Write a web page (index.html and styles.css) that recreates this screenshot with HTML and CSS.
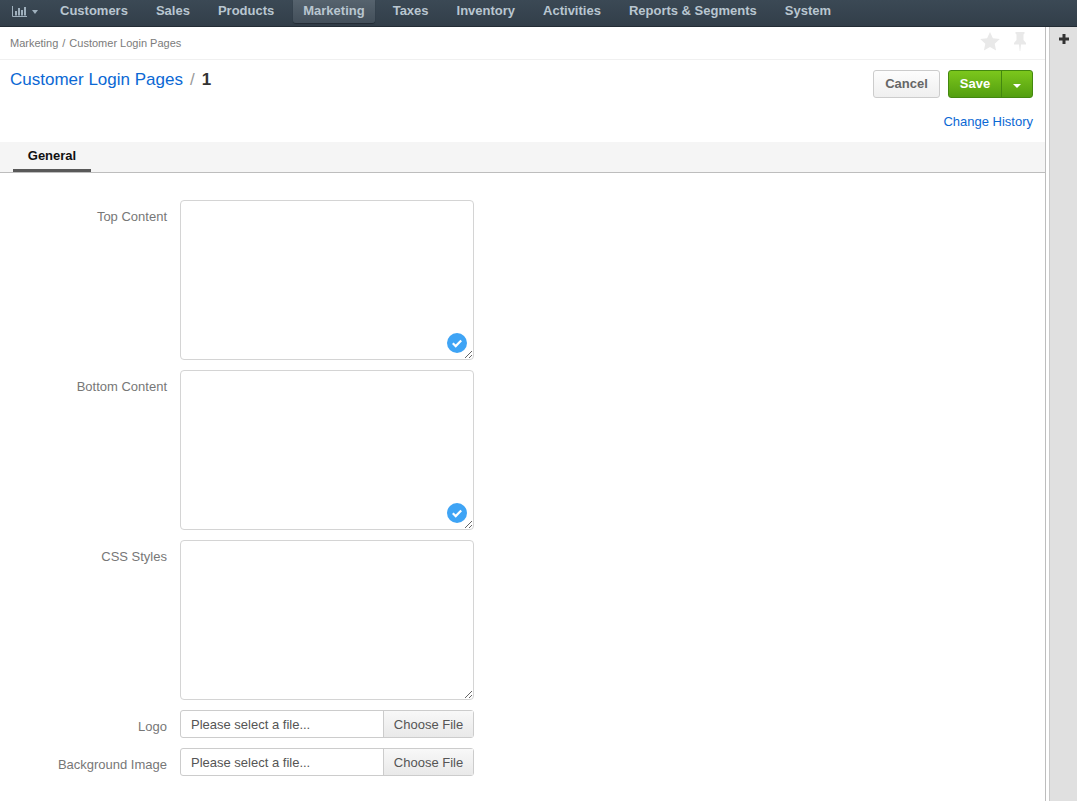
FILE: index.html
```html
<!doctype html>
<html lang="en">
<head>
    <meta charset="UTF-8">
    <title>Customer Login Pages</title>
    <link rel="stylesheet" href="styles.css">
</head>
<body>
<nav class="topnav">
    <a class="nav-dash">
        <svg width="15" height="11" viewBox="0 0 15 11"><path d="M0.500 0v10.500H15" fill="none" stroke="#9fb0bd"/><path d="M3 5h2v4.500H3zM6 2h2v7.500H6zM9 4h2v5.500H9zM12 1h2v8.500h-2z" fill="#9fb0bd"/></svg>
        <span class="caret caret-nav"></span>
    </a>
    <a class="nav-item">Customers</a>
    <a class="nav-item">Sales</a>
    <a class="nav-item">Products</a>
    <a class="nav-item active">Marketing</a>
    <a class="nav-item">Taxes</a>
    <a class="nav-item">Inventory</a>
    <a class="nav-item">Activities</a>
    <a class="nav-item">Reports &amp; Segments</a>
    <a class="nav-item">System</a>
</nav>
<div class="wrap">
    <main class="main">
        <div class="crumbs">
            <div class="crumb-text">Marketing<span class="crumb-sep">/</span>Customer Login Pages</div>
            <div class="crumb-icons">
                <svg width="20" height="19" viewBox="0 0 20 19"><path d="M10 0l2.900 6.300 6.900.8-5.100 4.600 1.400 6.800L10 15.100l-6.100 3.400 1.400-6.800L.2 7.100l6.900-.8z" fill="#e9e9e9"/></svg>
                <svg width="14" height="19" viewBox="0 0 14 19"><path d="M2.500 0h9v1.500l-1 1V8l2.500 3v1.500H8L7.300 19h-.6L6 12.500H1V11l2.500-3V2.500l-1-1z" fill="#e9e9e9"/></svg>
            </div>
        </div>
        <div class="head">
            <h1 class="title"><a>Customer Login Pages</a><span class="title-sep">/</span><b>1</b></h1>
            <div class="actions">
                <div class="btns">
                    <button class="btn-cancel">Cancel</button>
                    <div class="btn-save-group">
                        <button class="btn-save">Save</button>
                        <button class="btn-drop"><span class="caret caret-white"></span></button>
                    </div>
                </div>
                <a class="history">Change History</a>
            </div>
        </div>
        <div class="tabs"><span class="tab">General</span></div>
        <form class="form">
            <div class="row row-area">
                <label>Top Content</label>
                <div class="area-box">
                    <textarea></textarea>
                    <span class="check"><svg width="20" height="20" viewBox="0 0 20 20"><circle cx="10" cy="10" r="10" fill="#3fa4f5"/><path d="M5.800 10.300l2.900 2.800 5.500-5.700" fill="none" stroke="#fff" stroke-width="2.200"/></svg></span>
                </div>
            </div>
            <div class="row row-area">
                <label>Bottom Content</label>
                <div class="area-box">
                    <textarea></textarea>
                    <span class="check"><svg width="20" height="20" viewBox="0 0 20 20"><circle cx="10" cy="10" r="10" fill="#3fa4f5"/><path d="M5.800 10.300l2.900 2.800 5.500-5.700" fill="none" stroke="#fff" stroke-width="2.200"/></svg></span>
                </div>
            </div>
            <div class="row row-area">
                <label>CSS Styles</label>
                <div class="area-box">
                    <textarea></textarea>
                </div>
            </div>
            <div class="row row-file">
                <label>Logo</label>
                <div class="file"><span class="file-name">Please select a file...</span><span class="file-btn">Choose File</span></div>
            </div>
            <div class="row row-file">
                <label>Background Image</label>
                <div class="file"><span class="file-name">Please select a file...</span><span class="file-btn">Choose File</span></div>
            </div>
        </form>
    </main>
    <aside class="side">
        <svg width="10" height="10" viewBox="0 0 10 10"><path d="M3.500 0h3v3.500H10v3H6.500V10h-3V6.500H0v-3h3.500z" fill="#333"/></svg>
    </aside>
</div>
</body>
</html>
```

FILE: styles.css
```css
*{
    box-sizing: border-box;
}
html, body{
    height: 100%;
}
body{
    margin: 0;
    overflow: hidden;
    background: #fff;
    font-family: "Liberation Sans", Arial, sans-serif;
    font-size: 13px;
    color: #333;
}
a{
    text-decoration: none;
    color: #0b68d4;
}
.topnav{
    height: 27px;
    display: flex;
    align-items: flex-start;
    padding-left: 12px;
    background: linear-gradient(#3b4955, #323e49);
    border-bottom: 1px solid #232c34;
}
.nav-dash{
    display: flex;
    align-items: center;
    height: 23px;
    width: 34px;
    gap: 5px;
}
.nav-item{
    height: 23px;
    padding: 0 14px;
    line-height: 21px;
    font-size: 13px;
    font-weight: bold;
    color: #b9c6d0;
}
.nav-item.active{
    padding: 0 10px;
    margin-left: 5px;
    margin-right: 4px;
    background: linear-gradient(#56636e, #434f5a);
    border-radius: 0 0 3px 3px;
    box-shadow: 0 1px 1px #222b33;
}
.caret{
    display: inline-block;
    width: 0;
    height: 0;
    border-left: 4px solid transparent;
    border-right: 4px solid transparent;
    border-top: 4px solid #9fb0bd;
}
.caret-nav{
    border-left-width: 3.500px;
    border-right-width: 3.500px;
    margin-top: 1px;
}
.caret-white{
    border-top-color: #fff;
}
.wrap{
    display: flex;
    height: 774px;
}
.main{
    flex: none;
    width: 1046px;
    border-right: 1px solid #bdbdbd;
}
.side{
    flex: none;
    width: 28px;
    margin-left: 3px;
    padding: 7px 0 0 9px;
    background: #e0e0e0;
    border-left: 1px solid #c8c8c8;
}
.side svg{
    display: block;
}
.crumbs{
    height: 33px;
    display: flex;
    justify-content: space-between;
    align-items: center;
    padding: 0 18px 0 10px;
    border-bottom: 1px solid #f0f0f0;
}
.crumb-text{
    font-size: 11px;
    color: #7b7b7b;
}
.crumb-sep{
    margin: 0 4px;
}
.crumb-icons{
    display: flex;
    gap: 13px;
    align-items: center;
    padding-bottom: 3px;
}
.head{
    height: 82px;
    display: flex;
    justify-content: space-between;
    padding: 10px 12px 0 10px;
}
.title{
    margin: 0;
    font-size: 17px;
    font-weight: normal;
    line-height: 20px;
}
.title-sep{
    margin: 0 7px;
    color: #999;
}
.title b{
    color: #333;
}
.actions{
    display: flex;
    flex-direction: column;
    align-items: flex-end;
}
.btns{
    display: flex;
    gap: 8px;
}
.btn-cancel{
    width: 67px;
    height: 28px;
    padding: 0 0 2px;
    font: bold 13px "Liberation Sans", Arial, sans-serif;
    color: #666;
    background: linear-gradient(#fdfdfd, #efefef);
    border: 1px solid #ccc;
    border-radius: 3px;
}
.btn-save-group{
    display: flex;
    height: 28px;
    border: 1px solid #43880f;
    border-radius: 3px;
    background: linear-gradient(#7cc71c, #539e10);
}
.btn-save{
    width: 53px;
    padding: 0 0 2px;
    font: bold 13px "Liberation Sans", Arial, sans-serif;
    color: #fff;
    background: none;
    border: 0;
    border-right: 1px solid #43880f;
}
.btn-drop{
    width: 30px;
    padding: 0 0 2px;
    background: none;
    border: 0;
}
.history{
    margin-top: 16px;
    font-size: 13px;
    line-height: 16px;
}
.tabs{
    height: 31px;
    padding-left: 13px;
    background: #f5f5f5;
    border-bottom: 1px solid #bdbdbd;
}
.tab{
    display: block;
    width: 78px;
    height: 30px;
    border-bottom: 3px solid #595959;
    text-align: center;
    line-height: 28px;
    font-size: 13px;
    font-weight: bold;
    color: #111;
}
.form{
    padding-top: 27px;
}
.row{
    display: flex;
    gap: 13px;
}
.row label{
    width: 167px;
    padding-top: 9px;
    text-align: right;
    font-size: 13px;
    color: #777;
}
.row-area{
    height: 160px;
    margin-bottom: 10px;
}
.row-file{
    height: 28px;
    margin-bottom: 10px;
}
.area-box{
    position: relative;
    width: 294px;
    height: 160px;
}
textarea{
    display: block;
    width: 294px;
    height: 160px;
    border: 1px solid #d4d4d4;
    border-radius: 4px;
    background: #fff;
    outline: 0;
}
.check{
    position: absolute;
    right: 7px;
    bottom: 7px;
    width: 20px;
    height: 20px;
}
.file{
    display: flex;
    width: 294px;
    height: 28px;
    border: 1px solid #ccc;
    border-radius: 3px;
    font-size: 13px;
    line-height: 27px;
}
.file-name{
    flex: 1;
    padding-left: 10px;
    color: #555;
}
.file-btn{
    width: 90px;
    text-align: center;
    color: #555;
    background: linear-gradient(#f8f8f8, #e9e9e9);
    border-left: 1px solid #ccc;
}
```
